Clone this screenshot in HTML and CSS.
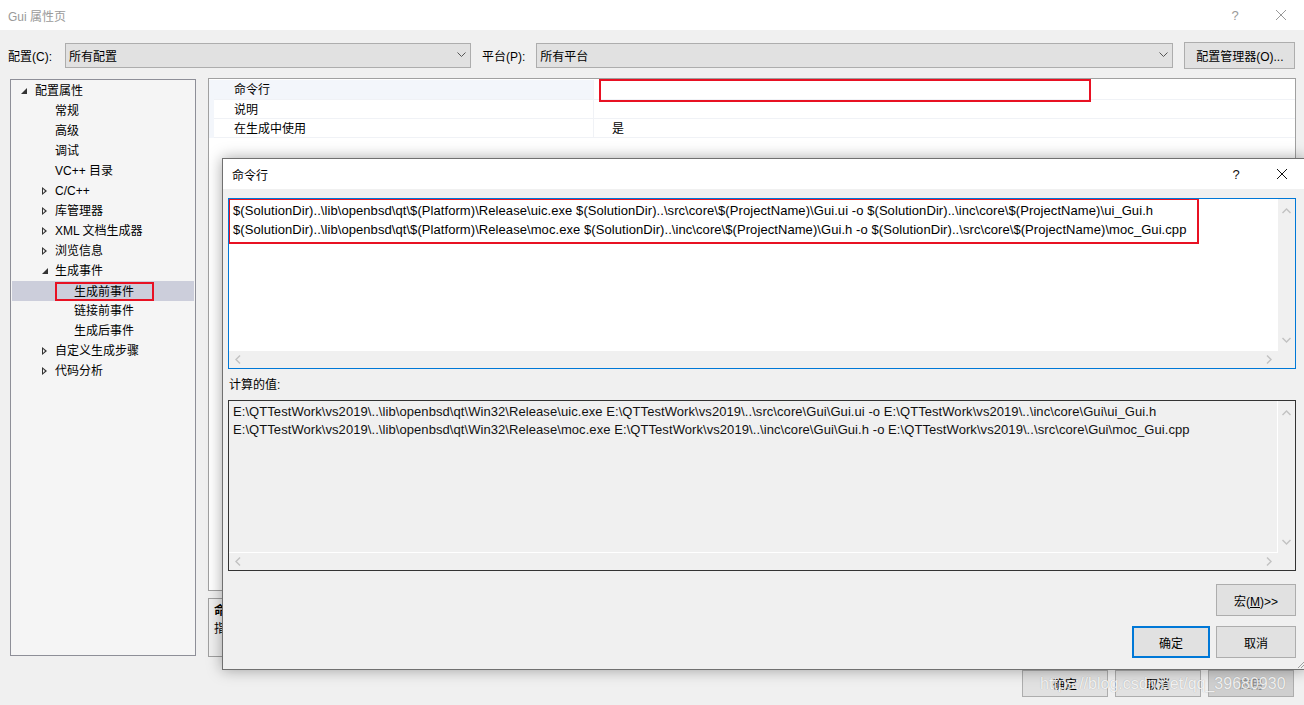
FILE: index.html
```html
<!DOCTYPE html>
<html lang="zh-CN">
<head>
  <meta charset="UTF-8">
  <title>Gui 属性页</title>
  <link rel="stylesheet" href="styles.css">
</head>
<body>
  <div class="window">
    <div class="titlebar">
      <span class="title">Gui 属性页</span>
      <span class="tb-btn help">?</span>
      <span class="tb-btn close">
        <svg width="12" height="12" viewBox="0 0 12 12"><path d="M1 1L11 11M11 1L1 11" stroke="#999" stroke-width="1" fill="none"/></svg>
      </span>
    </div>

    <div class="config-row">
      <label class="cfg-label">配置(C):</label>
      <div class="combo combo-config">
        <span>所有配置</span>
        <svg width="9" height="6" viewBox="0 0 9 6"><path d="M0.5 0.5L4.5 4.5L8.5 0.5" stroke="#555" fill="none"/></svg>
      </div>
      <label class="cfg-label plat-label">平台(P):</label>
      <div class="combo combo-platform">
        <span>所有平台</span>
        <svg width="9" height="6" viewBox="0 0 9 6"><path d="M0.5 0.5L4.5 4.5L8.5 0.5" stroke="#555" fill="none"/></svg>
      </div>
      <button class="btn btn-manager">配置管理器(O)...</button>
    </div>

    <div class="main">
      <div class="tree">
        <div class="node lvl0"><span class="exp open"></span>配置属性</div>
        <div class="node lvl1">常规</div>
        <div class="node lvl1">高级</div>
        <div class="node lvl1">调试</div>
        <div class="node lvl1">VC++ 目录</div>
        <div class="node lvl1"><span class="exp closed"></span>C/C++</div>
        <div class="node lvl1"><span class="exp closed"></span>库管理器</div>
        <div class="node lvl1"><span class="exp closed"></span>XML 文档生成器</div>
        <div class="node lvl1"><span class="exp closed"></span>浏览信息</div>
        <div class="node lvl1"><span class="exp open"></span>生成事件</div>
        <div class="node lvl2 selected"><span class="mark">生成前事件</span></div>
        <div class="node lvl2">链接前事件</div>
        <div class="node lvl2">生成后事件</div>
        <div class="node lvl1"><span class="exp closed"></span>自定义生成步骤</div>
        <div class="node lvl1"><span class="exp closed"></span>代码分析</div>
      </div>

      <div class="right">
        <div class="grid">
          <div class="prop first">
            <div class="pname">命令行</div>
            <div class="pvalue"><span class="mark-grid"></span></div>
          </div>
          <div class="prop">
            <div class="pname">说明</div>
            <div class="pvalue"></div>
          </div>
          <div class="prop">
            <div class="pname">在生成中使用</div>
            <div class="pvalue">是</div>
          </div>
        </div>
        <div class="desc">
          <div class="desc-title">命令行</div>
          <div class="desc-text">指定要运行的命令行</div>
        </div>
      </div>
    </div>

    <div class="footer">
      <button class="btn btn-foot">确定</button>
      <button class="btn btn-foot">取消</button>
      <button class="btn btn-foot dim">应用</button>
    </div>
  </div>

  <div class="dialog">
    <div class="dlg-title">
      <span class="title-dark">命令行</span>
      <span class="tb-btn help dark">?</span>
      <span class="tb-btn close">
        <svg width="12" height="12" viewBox="0 0 12 12"><path d="M1 1L11 11M11 1L1 11" stroke="#111" stroke-width="1" fill="none"/></svg>
      </span>
    </div>
    <div class="dlg-body">
      <div class="textbox editor">
        <div class="tb-content">
          <div class="mark-text">
            <div class="line">$(SolutionDir)..\lib\openbsd\qt\$(Platform)\Release\uic.exe $(SolutionDir)..\src\core\$(ProjectName)\Gui.ui -o $(SolutionDir)..\inc\core\$(ProjectName)\ui_Gui.h</div>
            <div class="line">$(SolutionDir)..\lib\openbsd\qt\$(Platform)\Release\moc.exe $(SolutionDir)..\inc\core\$(ProjectName)\Gui.h -o $(SolutionDir)..\src\core\$(ProjectName)\moc_Gui.cpp</div>
          </div>
        </div>
        <div class="vscroll">
          <svg width="9" height="6" viewBox="0 0 9 6"><path d="M0.5 5L4.5 1L8.5 5" stroke="#c2c2c2" stroke-width="1.4" fill="none"/></svg>
          <svg width="9" height="6" viewBox="0 0 9 6"><path d="M0.5 1L4.5 5L8.5 1" stroke="#c2c2c2" stroke-width="1.4" fill="none"/></svg>
        </div>
        <div class="hscroll">
          <svg width="6" height="9" viewBox="0 0 6 9"><path d="M5 0.5L1 4.5L5 8.5" stroke="#c2c2c2" stroke-width="1.4" fill="none"/></svg>
          <svg width="6" height="9" viewBox="0 0 6 9"><path d="M1 0.5L5 4.5L1 8.5" stroke="#c2c2c2" stroke-width="1.4" fill="none"/></svg>
        </div>
        <div class="corner"></div>
      </div>

      <div class="calc-label">计算的值:</div>

      <div class="textbox computed">
        <div class="tb-content">
          <div class="line">E:\QTTestWork\vs2019\..\lib\openbsd\qt\Win32\Release\uic.exe E:\QTTestWork\vs2019\..\src\core\Gui\Gui.ui -o E:\QTTestWork\vs2019\..\inc\core\Gui\ui_Gui.h</div>
          <div class="line">E:\QTTestWork\vs2019\..\lib\openbsd\qt\Win32\Release\moc.exe E:\QTTestWork\vs2019\..\inc\core\Gui\Gui.h -o E:\QTTestWork\vs2019\..\src\core\Gui\moc_Gui.cpp</div>
        </div>
        <div class="vscroll">
          <svg width="9" height="6" viewBox="0 0 9 6"><path d="M0.5 5L4.5 1L8.5 5" stroke="#c2c2c2" stroke-width="1.4" fill="none"/></svg>
          <svg width="9" height="6" viewBox="0 0 9 6"><path d="M0.5 1L4.5 5L8.5 1" stroke="#c2c2c2" stroke-width="1.4" fill="none"/></svg>
        </div>
        <div class="hscroll">
          <svg width="6" height="9" viewBox="0 0 6 9"><path d="M5 0.5L1 4.5L5 8.5" stroke="#c2c2c2" stroke-width="1.4" fill="none"/></svg>
          <svg width="6" height="9" viewBox="0 0 6 9"><path d="M1 0.5L5 4.5L1 8.5" stroke="#c2c2c2" stroke-width="1.4" fill="none"/></svg>
        </div>
        <div class="corner"></div>
      </div>

      <div class="dlg-buttons">
        <button class="btn btn-dlg macro">宏(<u>M</u>)&gt;&gt;</button>
        <div class="ok-row">
          <button class="btn btn-dlg default">确定</button>
          <button class="btn btn-dlg">取消</button>
        </div>
      </div>
    </div>
    <svg class="grip" width="10" height="10" viewBox="0 0 10 10"><path d="M9 3L3 9M9 6L6 9" stroke="#a0a0a0" fill="none"/></svg>
  </div>

  <div class="watermark">https://blog.csdn.net/qq_39680930</div>
</body>
</html>
```

FILE: styles.css
```css
body {
  margin: 0;
  width: 1304px;
  height: 705px;
  overflow: hidden;
  position: relative;
  background: #f0f0f0;
  font-family: "Liberation Sans", "Noto Sans CJK SC", sans-serif;
  font-size: 12px;
  color: #000;
}
.window {
  display: flex;
  flex-direction: column;
  height: 705px;
}
.titlebar {
  height: 30px;
  background: white;
  display: flex;
  align-items: center;
  padding-left: 8px;
}
.title {
  color: #9a9a9a;
  font-size: 12px;
  flex: 1;
}
.tb-btn {
  width: 46px;
  text-align: center;
  display: flex;
  justify-content: center;
  align-items: center;
}
.help {
  color: #999;
  font-size: 13px;
}
.help.dark {
  color: #111;
}
.config-row {
  height: 48px;
  display: flex;
  align-items: center;
  padding: 2px 10px 0 8px;
  box-sizing: border-box;
}
.config-row > * {
  flex-shrink: 0;
  white-space: nowrap;
}
.cfg-label {
  margin-right: 13px;
}
.plat-label {
  margin-left: 11px;
  margin-right: 11px;
}
.combo {
  height: 25px;
  box-sizing: border-box;
  border: 1px solid #adadad;
  background: #e1e1e1;
  display: flex;
  align-items: center;
  justify-content: space-between;
  padding: 0 3px 0 3px;
}
.combo svg {
  margin-right: 1px;
}
.combo-config {
  width: 406px;
}
.combo-platform {
  width: 637px;
}
.btn {
  font-family: "Liberation Sans", "Noto Sans CJK SC", sans-serif;
  font-size: 12px;
  background: #e1e1e1;
  border: 1px solid #adadad;
  color: #000;
  padding: 0;
}
.btn-manager {
  width: 111px;
  height: 27px;
  margin-left: 11px;
}
.main {
  display: flex;
  height: 579px;
}
.tree {
  width: 186px;
  height: 577px;
  margin: 1px 0 0 10px;
  box-sizing: border-box;
  border: 1px solid #8e8f98;
  background: #f5f5f5;
  padding: 1px 1px 0 1px;
}
.node {
  height: 20px;
  line-height: 20px;
  display: flex;
  align-items: center;
  white-space: nowrap;
}
.lvl0 { padding-left: 9px; }
.lvl1 { padding-left: 43px; }
.lvl2 { padding-left: 62px; }
.exp {
  width: 0;
  height: 0;
  margin-left: -13px;
  margin-right: 13px;
  position: relative;
}
.exp.open::before {
  content: "";
  position: absolute;
  left: 0;
  top: -3px;
  border-style: solid;
  border-width: 0 0 6px 6px;
  border-color: transparent transparent #333 transparent;
}
.lvl0 .exp {
  margin-left: 0;
  margin-right: 14px;
}
.exp.closed::before {
  content: "";
  position: absolute;
  left: 0;
  top: -4px;
  border-style: solid;
  border-width: 4px 0 4px 5px;
  border-color: transparent transparent transparent #333;
}
.exp.closed::after {
  content: "";
  position: absolute;
  left: 1px;
  top: -2px;
  border-style: solid;
  border-width: 2px 0 2px 2.5px;
  border-color: transparent transparent transparent #f5f5f5;
}
.node.selected {
  background: #cccedb;
}
.mark {
  border: 2px solid #e81123;
  padding: 0 16px 0 17px;
  margin-left: -19px;
  height: 19px;
  line-height: 17px;
  box-sizing: border-box;
  width: 99px;
}
.right {
  margin-left: 12px;
  width: 1088px;
  display: flex;
  flex-direction: column;
}
.grid {
  height: 513px;
  box-sizing: border-box;
  border: 1px solid #a0a0a0;
  background: white;
  padding: 1px 0 0 5px;
  background-image: linear-gradient(#f3f6fb, #f3f6fb);
  background-size: 5px 58px;
  background-position: 0 1px;
  background-repeat: no-repeat;
}
.prop {
  height: 19px;
  display: flex;
  border-bottom: 1px solid #f0f2f6;
  box-sizing: border-box;
}
.prop.first {
  height: 20px;
}
.pname {
  width: 359px;
  padding-left: 20px;
  line-height: 21px;
  border-right: 1px solid #f0f2f6;
}
.prop.first .pname {
  background: #f3f6fb;
}
.pvalue {
  flex: 1;
  padding-left: 18px;
  line-height: 21px;
  position: relative;
}
.mark-grid {
  position: absolute;
  left: 5px;
  top: 0;
  width: 492px;
  height: 23px;
  box-sizing: border-box;
  border: 2px solid #e81123;
  margin-top: -1px;
}
.desc {
  margin-top: 7px;
  height: 59px;
  box-sizing: border-box;
  border: 1px solid #a0a0a0;
  padding: 3px 5px;
}
.desc-title {
  font-weight: bold;
  line-height: 18px;
}
.desc-text {
  line-height: 18px;
}
.footer {
  display: flex;
  justify-content: flex-end;
  padding: 13px 10px 0 0;
  gap: 7px;
}
.btn-foot {
  width: 86px;
  height: 27px;
}
.btn-foot.dim {
  background: #cfcfcf;
  color: #8a8a8a;
}

.dialog {
  position: absolute;
  left: 222px;
  top: 158px;
  width: 1084px;
  height: 512px;
  box-sizing: border-box;
  border: 1px solid #707070;
  background: #f0f0f0;
  box-shadow: 0 0 14px rgba(0, 0, 0, 0.35);
  display: flex;
  flex-direction: column;
}
.dlg-title {
  height: 30px;
  background: white;
  display: flex;
  align-items: center;
  padding-left: 9px;
}
.title-dark {
  flex: 1;
}
.dlg-body {
  padding: 9px 9px 0 5px;
  display: flex;
  flex-direction: column;
}
.textbox {
  height: 171px;
  box-sizing: border-box;
  display: grid;
  grid-template-columns: 1fr 17px;
  grid-template-rows: 1fr 17px;
  background: white;
}
.editor {
  border: 1px solid #0078d7;
}
.computed {
  border: 1px solid #333;
  background: #f0f0f0;
}
.tb-content {
  padding: 1px 4px;
  overflow: hidden;
  font-size: 13px;
  letter-spacing: 0.07px;
}
.line {
  height: 19px;
  line-height: 19px;
  white-space: nowrap;
}
.computed .line {
  height: 18px;
  line-height: 18px;
  color: #111;
}
.computed .tb-content {
  padding-top: 2px;
  border-right: 1px solid white;
  border-bottom: 1px solid white;
}
.mark-text {
  border: 2px solid #e81123;
  margin: -2px 0 0 -5px;
  padding: 1px 0 3px 3px;
  width: 964px;
}
.vscroll {
  background: #f0f0f0;
  display: flex;
  flex-direction: column;
  justify-content: space-between;
  align-items: center;
  padding: 9px 0 8px;
}
.hscroll {
  background: #f0f0f0;
  display: flex;
  justify-content: space-between;
  align-items: center;
  padding: 0 6px;
}
.corner {
  background: #f0f0f0;
}
.calc-label {
  height: 31px;
  line-height: 31px;
  padding-top: 1px;
  box-sizing: border-box;
  padding-left: 1px;
}
.dlg-buttons {
  display: flex;
  flex-direction: column;
  align-items: flex-end;
  padding-top: 13px;
}
.btn-dlg {
  width: 80px;
  height: 32px;
}
.macro {
  margin-bottom: 10px;
}
.ok-row {
  display: flex;
  gap: 6px;
}
.btn-dlg.default {
  width: 78px;
  border: 2px solid #0078d7;
}
.grip {
  position: absolute;
  right: 0;
  bottom: 0;
}
.watermark {
  position: absolute;
  left: 1040px;
  top: 675px;
  font-size: 16px;
  color: rgba(255, 255, 255, 0.85);
  text-shadow: 0 0 1px rgba(0, 0, 0, 0.3);
  white-space: nowrap;
}
```
